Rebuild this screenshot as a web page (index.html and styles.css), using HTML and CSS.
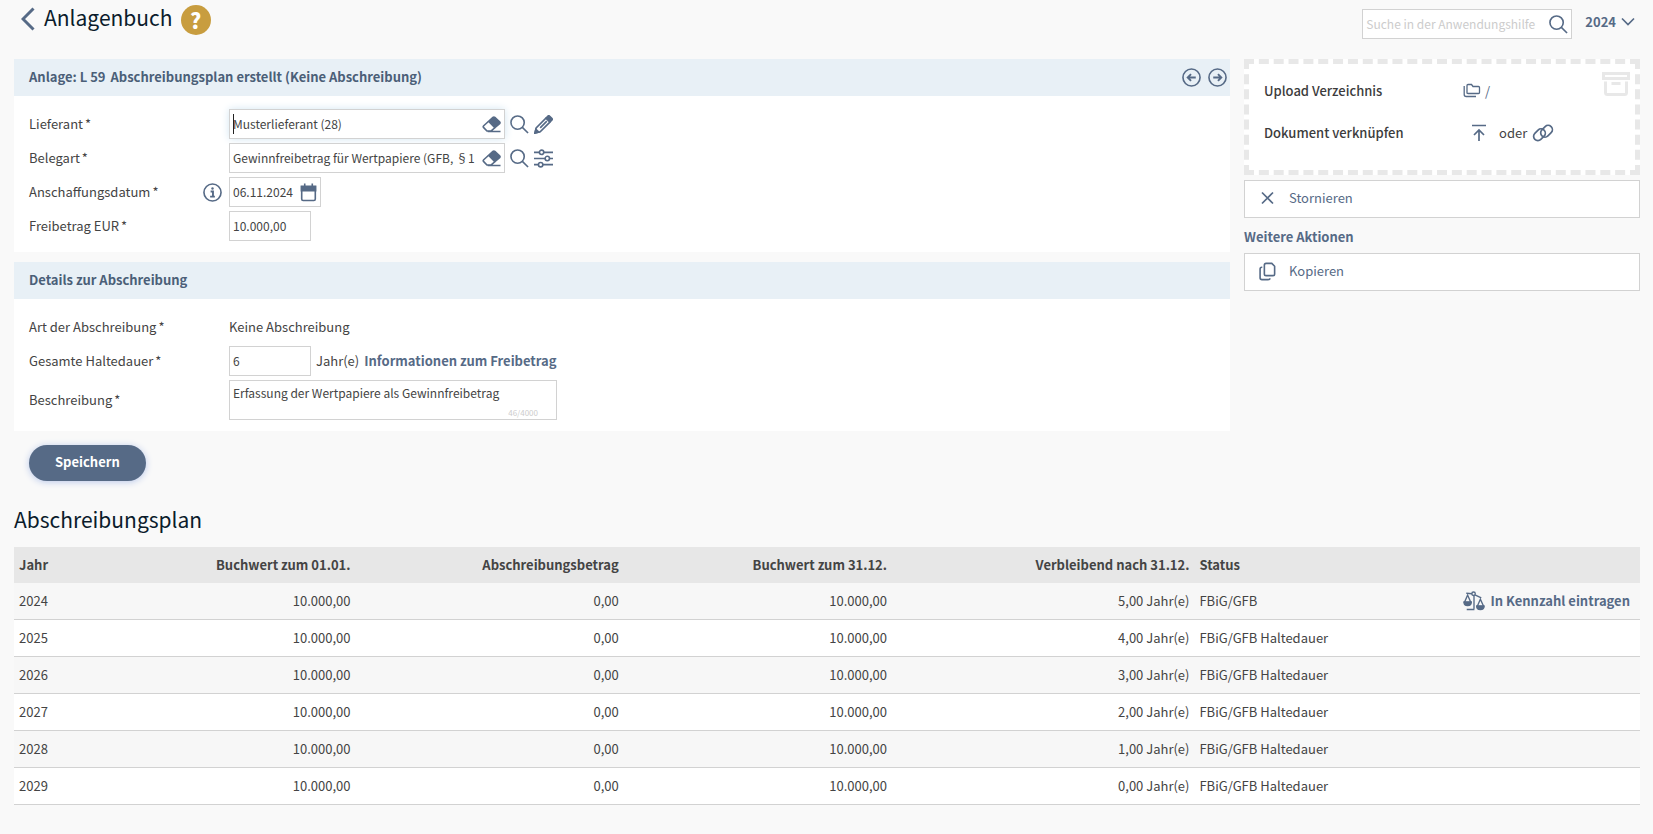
FILE: index.html
```html
<!DOCTYPE html>
<html lang="de">
<head>
    <meta charset="UTF-8">
    <meta name="viewport" content="width=device-width, initial-scale=1.0">
    <title>Anlagenbuch</title>
    <link rel="stylesheet" href="styles.css">
</head>
<body>
    <!-- Icons -->
    <svg class="sprite" width="0" height="0" aria-hidden="true">
        <symbol id="i-search" viewBox="0 0 20 20"><circle cx="8" cy="8" r="7"/><path d="M13 13l6 6"/></symbol>
        <symbol id="i-eraser" viewBox="0 0 20 20"><path d="M7 6.600L11.500 2.600q1-.8 2 0l5 4.600q.9 1 0 2L13.500 13.400z" fill="currentColor"/><path d="M7 6.600L1.800 11.300q-1 1 0 2l3.400 3.500h4.500l3.800-3.400M6 17.300h13.500"/></symbol>
        <symbol id="i-pencil" viewBox="0 0 20 20"><path d="M1 19l1.300-5.500L12.500 3.300l4.200 4.200L6.500 17.700z"/><path d="M13.200 2.600l1.300-1.300q1-1 2 0l2.200 2.200q1 1 0 2l-1.300 1.300zM1 19l1-4 3 3z" fill="currentColor"/><path d="M6.500 13.500l7-7"/></symbol>
        <symbol id="i-sliders" viewBox="0 0 20 20"><path d="M0 3.500h5.500M10.500 3.500H20M0 10h11.500M16.500 10H20M0 16.500h4.500M9.500 16.500H20"/><circle cx="8" cy="3.500" r="2.300"/><circle cx="14" cy="10" r="2.300"/><circle cx="7" cy="16.500" r="2.300"/></symbol>
        <symbol id="i-info" viewBox="0 0 20 20"><circle cx="10" cy="10" r="9"/><path d="M8 9h2.500v5M7.500 14.300h5" stroke-width="2"/><circle cx="10" cy="5.800" r="1.300" fill="currentColor" stroke="none"/></symbol>
        <symbol id="i-calendar" viewBox="0 0 18 20"><path d="M1.800 4h14.400v13q0 1.500-1.500 1.500H3.300q-1.500 0-1.500-1.500z"/><path d="M1.500 3.500h15V8h-15z" fill="currentColor"/><path d="M5 .5v3M13 .5v3"/></symbol>
        <symbol id="i-left" viewBox="0 0 20 20"><circle cx="10" cy="10" r="9"/><path d="M14.500 10h-8M9.500 6.500L6 10l3.500 3.500" stroke-width="2"/></symbol>
        <symbol id="i-right" viewBox="0 0 20 20"><circle cx="10" cy="10" r="9"/><path d="M5.500 10h8M10.500 6.500L14 10l-3.500 3.500" stroke-width="2"/></symbol>
        <symbol id="i-folders" viewBox="0 0 18 16"><path d="M4 10.500V2.500q0-1 1-1h3.500l1.500 2h5.500q1 0 1 1v5q0 1-1 1H5q-1 0-1-1zM1.200 3v8.500q0 2 2 2H13"/></symbol>
        <symbol id="i-upload" viewBox="0 0 16 18"><path d="M1 1.500h14M8 17V6.500M3 11l5-5 5 5"/></symbol>
        <symbol id="i-link" viewBox="0 0 22 18"><rect x="1" y="6.500" width="13" height="8.500" rx="4.200" transform="rotate(-45 7.500 10.800)"/><rect x="8" y="3" width="13" height="8.500" rx="4.200" transform="rotate(-45 14.500 7.200)"/></symbol>
        <symbol id="i-archive" viewBox="0 0 28 24"><path d="M1.500 1.500h25v5h-25zM3.500 9.500v11q0 2 2 2h17q2 0 2-2v-11M9.500 11.500h9"/></symbol>
        <symbol id="i-close" viewBox="0 0 14 14"><path d="M1.500 1.500l11 11M12.500 1.500l-11 11"/></symbol>
        <symbol id="i-copy" viewBox="0 0 18 20"><path d="M7.500 1.500h6l3 3v8q0 1.800-1.800 1.800H7.500q-1.800 0-1.800-1.800V3.300q0-1.800 1.800-1.800zM3.500 5.500H3Q1.200 5.500 1.200 7.300v9.200q0 2 2 2H9.500q2 0 2-1.500"/></symbol>
        <symbol id="i-scale" viewBox="0 0 24 22"><path d="M3.500 2.500l6.500 .5M13 4.200l7 3.300M12 5v14.500M4 20.300h8.500"/><circle cx="11.500" cy="3" r="1.900"/><path d="M5 4.500l-3.500 8h7zM19 9l-3.500 8h7.200z"/><path d="M1 12h8q0 4-4 4t-4-4zM15 16.500h8q0 4-4 4t-4-4z" fill="currentColor"/></symbol>
        <symbol id="i-back" viewBox="0 0 14 24"><path d="M12.500 1.500L2 12l10.500 10.500" stroke-width="3"/></symbol>
        <symbol id="i-down" viewBox="0 0 14 10"><path d="M1 1.500l6 6 6-6"/></symbol>
    </svg>

    <header class="topbar">
        <a class="back" href="#" aria-label="Zurück"><svg class="icon"><use href="#i-back"/></svg></a>
        <h1>Anlagenbuch</h1>
        <button class="help" type="button">?</button>
        <form class="search field">
            <input type="search" placeholder="Suche in der Anwendungshilfe" aria-label="Suche in der Anwendungshilfe">
            <button class="icon-btn" type="button" aria-label="Suchen"><svg class="icon"><use href="#i-search"/></svg></button>
        </form>
        <button class="year" type="button">2024 <svg class="icon"><use href="#i-down"/></svg></button>
    </header>

    <div class="layout">
        <form class="main">
            <section class="panel">
                <div class="panel-head">
                    <h2>Anlage: L 59</h2>
                    <h2>Abschreibungsplan erstellt (Keine Abschreibung)</h2>
                    <div class="pager">
                        <button class="icon-btn" type="button" aria-label="Vorherige"><svg class="icon"><use href="#i-left"/></svg></button>
                        <button class="icon-btn" type="button" aria-label="Nächste"><svg class="icon"><use href="#i-right"/></svg></button>
                    </div>
                </div>
                <div class="panel-body">
                    <div class="row">
                        <label for="lieferant">Lieferant<span class="req">*</span></label>
                        <div class="field wide active">
                            <span class="caret"></span>
                            <input id="lieferant" type="text" value="Musterlieferant (28)">
                            <button class="icon-btn" type="button" aria-label="Leeren"><svg class="icon"><use href="#i-eraser"/></svg></button>
                        </div>
                        <button class="icon-btn" type="button" aria-label="Suchen"><svg class="icon"><use href="#i-search"/></svg></button>
                        <button class="icon-btn" type="button" aria-label="Bearbeiten"><svg class="icon"><use href="#i-pencil"/></svg></button>
                    </div>
                    <div class="row">
                        <label for="belegart">Belegart<span class="req">*</span></label>
                        <div class="field wide">
                            <input id="belegart" type="text" value="Gewinnfreibetrag für Wertpapiere (GFB, §1">
                            <button class="icon-btn" type="button" aria-label="Leeren"><svg class="icon"><use href="#i-eraser"/></svg></button>
                        </div>
                        <button class="icon-btn" type="button" aria-label="Suchen"><svg class="icon"><use href="#i-search"/></svg></button>
                        <button class="icon-btn" type="button" aria-label="Einstellungen"><svg class="icon"><use href="#i-sliders"/></svg></button>
                    </div>
                    <div class="row">
                        <div class="label-info">
                            <label for="datum">Anschaffungsdatum<span class="req">*</span></label>
                            <button class="icon-btn" type="button" aria-label="Info"><svg class="icon"><use href="#i-info"/></svg></button>
                        </div>
                        <div class="field date">
                            <input id="datum" type="text" value="06.11.2024">
                            <button class="icon-btn" type="button" aria-label="Kalender"><svg class="icon"><use href="#i-calendar"/></svg></button>
                        </div>
                    </div>
                    <div class="row">
                        <label for="freibetrag">Freibetrag EUR<span class="req">*</span></label>
                        <div class="field short"><input id="freibetrag" type="text" value="10.000,00"></div>
                    </div>
                </div>
            </section>

            <section class="panel">
                <div class="panel-head">
                    <h2>Details zur Abschreibung</h2>
                </div>
                <div class="panel-body">
                    <div class="row">
                        <span class="label">Art der Abschreibung<span class="req">*</span></span>
                        <span>Keine Abschreibung</span>
                    </div>
                    <div class="row">
                        <label for="dauer">Gesamte Haltedauer<span class="req">*</span></label>
                        <div class="field short"><input id="dauer" type="text" value="6"></div>
                        <span>Jahr(e)</span>
                        <a href="#">Informationen zum Freibetrag</a>
                    </div>
                    <div class="row">
                        <label for="beschreibung">Beschreibung<span class="req">*</span></label>
                        <div class="textbox">
                            <textarea id="beschreibung" rows="1">Erfassung der Wertpapiere als Gewinnfreibetrag</textarea>
                            <span class="counter">46/4000</span>
                        </div>
                    </div>
                </div>
            </section>

            <button class="save" type="button">Speichern</button>
        </form>

        <aside class="side">
            <div class="upload">
                <dl>
                    <dt>Upload Verzeichnis</dt>
                    <dd><a href="#" class="folder"><svg class="icon"><use href="#i-folders"/></svg>/</a></dd>
                    <dt>Dokument verknüpfen</dt>
                    <dd class="choose">
                        <button class="icon-btn" type="button" aria-label="Hochladen"><svg class="icon arrow"><use href="#i-upload"/></svg></button>
                        oder
                        <button class="icon-btn" type="button" aria-label="Verknüpfen"><svg class="icon chain"><use href="#i-link"/></svg></button>
                    </dd>
                </dl>
                <svg class="icon archive"><use href="#i-archive"/></svg>
            </div>
            <button class="action" type="button"><svg class="icon close"><use href="#i-close"/></svg>Stornieren</button>
            <h3>Weitere Aktionen</h3>
            <button class="action" type="button"><svg class="icon"><use href="#i-copy"/></svg>Kopieren</button>
        </aside>
    </div>

    <h2 class="plan-title">Abschreibungsplan</h2>
    <table class="plan">
        <colgroup>
            <col class="c-year"><col class="c-start"><col class="c-amount"><col class="c-end"><col class="c-rest"><col><col>
        </colgroup>
        <thead>
            <tr>
                <th>Jahr</th>
                <th class="num">Buchwert zum 01.01.</th>
                <th class="num">Abschreibungsbetrag</th>
                <th class="num">Buchwert zum 31.12.</th>
                <th class="num">Verbleibend nach 31.12.</th>
                <th>Status</th>
                <th></th>
            </tr>
        </thead>
        <tbody>
            <tr>
                <td>2024</td>
                <td class="num">10.000,00</td>
                <td class="num">0,00</td>
                <td class="num">10.000,00</td>
                <td class="num">5,00 Jahr(e)</td>
                <td>FBiG/GFB</td>
                <td><a class="kennzahl" href="#"><svg class="icon"><use href="#i-scale"/></svg>In Kennzahl eintragen</a></td>
            </tr>
            <tr>
                <td>2025</td>
                <td class="num">10.000,00</td>
                <td class="num">0,00</td>
                <td class="num">10.000,00</td>
                <td class="num">4,00 Jahr(e)</td>
                <td>FBiG/GFB Haltedauer</td>
                <td></td>
            </tr>
            <tr>
                <td>2026</td>
                <td class="num">10.000,00</td>
                <td class="num">0,00</td>
                <td class="num">10.000,00</td>
                <td class="num">3,00 Jahr(e)</td>
                <td>FBiG/GFB Haltedauer</td>
                <td></td>
            </tr>
            <tr>
                <td>2027</td>
                <td class="num">10.000,00</td>
                <td class="num">0,00</td>
                <td class="num">10.000,00</td>
                <td class="num">2,00 Jahr(e)</td>
                <td>FBiG/GFB Haltedauer</td>
                <td></td>
            </tr>
            <tr>
                <td>2028</td>
                <td class="num">10.000,00</td>
                <td class="num">0,00</td>
                <td class="num">10.000,00</td>
                <td class="num">1,00 Jahr(e)</td>
                <td>FBiG/GFB Haltedauer</td>
                <td></td>
            </tr>
            <tr>
                <td>2029</td>
                <td class="num">10.000,00</td>
                <td class="num">0,00</td>
                <td class="num">10.000,00</td>
                <td class="num">0,00 Jahr(e)</td>
                <td>FBiG/GFB Haltedauer</td>
                <td></td>
            </tr>
        </tbody>
    </table>
</body>
</html>
```
FILE: styles.css
```css
/* General */
* {
    box-sizing: border-box;
}

body {
    margin: 0;
    padding: 0 13px 28px 14px;
    background-color: #f9f9f9;
    color: #444444;
    font-family: "Noto Sans CJK SC", "Noto Sans", sans-serif;
    font-size: 13px;
    line-height: 20px;
}

h1, h2, h3, dl, dd {
    margin: 0;
}

input, textarea, button {
    font: inherit;
    color: inherit;
}

button {
    border: 0;
    padding: 0;
    background: none;
    cursor: pointer;
}

a {
    color: #566a86;
    font-weight: bold;
    text-decoration: none;
}

.sprite {
    position: absolute;
}

.icon {
    display: block;
    flex: none;
    width: 19px;
    height: 19px;
    fill: none;
    stroke: currentColor;
    stroke-width: 1.7;
    color: #566a86;
}

.icon-btn {
    flex: none;
}

/* Top bar */
.topbar {
    display: flex;
    align-items: flex-start;
    height: 59px;
    padding: 5px 5px 0 7px;
}

.back .icon {
    width: 14px;
    height: 24px;
    margin-top: 2px;
}

h1 {
    margin-left: 9px;
    font-size: 21px;
    font-weight: normal;
    line-height: 24px;
    color: #0b1c2c;
}

.help {
    width: 30px;
    height: 30px;
    margin-left: 8px;
    border-radius: 50%;
    background-color: #c89d3f;
    color: #ffffff;
    font-size: 21px;
    font-weight: 900;
    line-height: 28px;
}

.search {
    width: 210px;
    margin: 4px 13px 0 auto;
}

.year {
    display: flex;
    align-items: center;
    gap: 5px;
    margin-top: 7px;
    color: #566a86;
    font-weight: bold;
}

.year .icon {
    width: 14px;
    height: 10px;
}

/* Form fields */
.field {
    position: relative;
    display: flex;
    align-items: center;
    height: 30px;
    padding-right: 3px;
    border: 1px solid #d2d2d2;
    background-color: #ffffff;
}

.field input {
    flex: 1;
    min-width: 0;
    height: 28px;
    padding: 0 0 2px 3px;
    border: 0;
    outline: 0;
    background: none;
}

.field input,
.textbox textarea {
    font-size: 12px;
}

.field input::placeholder {
    color: #cccccc;
}

.field.wide {
    width: 276px;
}

.field.date {
    width: 92px;
}

.field.short {
    width: 82px;
}

.field.active {
    box-shadow: 0 0 8px #d3e6f2;
}

.caret {
    position: absolute;
    left: 3px;
    top: 4px;
    width: 1px;
    height: 20px;
    background-color: #222222;
}

.date .icon {
    width: 17px;
}

/* Panels */
.layout {
    display: grid;
    grid-template-columns: minmax(0, 1fr) 396px;
    gap: 14px;
}

.panel {
    margin-bottom: 10px;
    background-color: #ffffff;
}

.panel-head {
    display: flex;
    align-items: center;
    gap: 5px;
    height: 37px;
    padding: 0 3px 0 15px;
    background-color: #e8f0f6;
}

.panel-head h2 {
    padding-bottom: 2px;
    font-size: 13px;
    font-weight: bold;
    color: #4b5f78;
}

.pager {
    display: flex;
    gap: 7px;
    margin-left: auto;
}

.panel-body {
    display: flex;
    flex-direction: column;
    gap: 4px;
    padding: 13px 15px 11px;
}

.row {
    display: flex;
    align-items: center;
    gap: 5px;
    min-height: 30px;
}

.row > label,
.row > .label,
.label-info {
    flex: none;
    width: 195px;
}

.label-info {
    display: flex;
    align-items: center;
    justify-content: space-between;
    padding-right: 2px;
}

.req {
    margin-left: 2px;
}

.textbox {
    position: relative;
    width: 328px;
}

.textbox textarea {
    display: block;
    width: 100%;
    height: 40px;
    padding: 2px 3px 16px;
    border: 1px solid #d2d2d2;
    outline: 0;
    resize: none;
    overflow: hidden;
}

.counter {
    position: absolute;
    right: 19px;
    bottom: 1px;
    font-size: 8px;
    line-height: 12px;
    color: #cccccc;
}

.save {
    height: 36px;
    margin: 4px 0 0 15px;
    padding: 0 26px 2px;
    border-radius: 18px;
    background-color: #566a86;
    box-shadow: 0 1px 7px #b9c8ea;
    color: #ffffff;
    font-weight: bold;
}

/* Side column */
.upload {
    display: flex;
    justify-content: space-between;
    height: 116px;
    border: 5px dashed #e8e8e8;
    background-color: #ffffff;
}

.upload dl {
    display: grid;
    grid-template-columns: 199px auto;
    align-content: start;
    row-gap: 22px;
    padding: 17px 0 0 15px;
}

.upload dt {
    font-weight: 500;
    color: #3c3c3c;
}

.folder {
    display: flex;
    align-items: center;
    gap: 4px;
    font-weight: normal;
}

.folder .icon {
    width: 18px;
    height: 16px;
    stroke-width: 1.3;
}

.choose {
    display: flex;
    align-items: center;
    padding-left: 8px;
}

.icon.arrow {
    width: 16px;
    height: 18px;
    margin-right: 12px;
}

.icon.chain {
    width: 22px;
    height: 18px;
    margin-left: 5px;
}

.icon.archive {
    width: 28px;
    height: 24px;
    margin: 8px 5px;
    color: #e8e8e8;
    stroke-width: 3;
}

.action {
    display: flex;
    align-items: center;
    gap: 12px;
    width: 100%;
    height: 38px;
    margin-top: 5px;
    padding: 0 13px 2px;
    border: 1px solid #d2d2d2;
    background-color: #ffffff;
    color: #566a86;
}

.action .close {
    height: 14px;
}

.side h3 {
    margin: 9px 0 6px;
    font-size: 13px;
    font-weight: bold;
    color: #566a86;
}

/* Depreciation plan */
.plan-title {
    margin: 23px 0 13px;
    font-size: 21px;
    font-weight: normal;
    line-height: 30px;
    color: #0b1c2c;
}

.plan {
    width: 100%;
    table-layout: fixed;
    border-spacing: 0;
}

.c-year { width: 8%; }
.c-start { width: 13%; }
.c-amount { width: 16.5%; }
.c-end { width: 16.5%; }
.c-rest { width: 18.6%; }

.plan th,
.plan td {
    height: 37px;
    padding: 0 5px 1px;
    text-align: left;
}

.plan th {
    height: 36px;
    background-color: #e7e7e7;
}

.plan td {
    border-bottom: 1px solid #d2d2d2;
    background-color: #ffffff;
}

.plan tr:nth-child(odd) td {
    background-color: #f7f7f7;
}

.plan .num {
    text-align: right;
}

.kennzahl {
    display: flex;
    align-items: center;
    justify-content: flex-end;
    gap: 4px;
    padding-right: 5px;
}

.kennzahl .icon {
    width: 24px;
    height: 20px;
    stroke-width: 1.5;
}
```
